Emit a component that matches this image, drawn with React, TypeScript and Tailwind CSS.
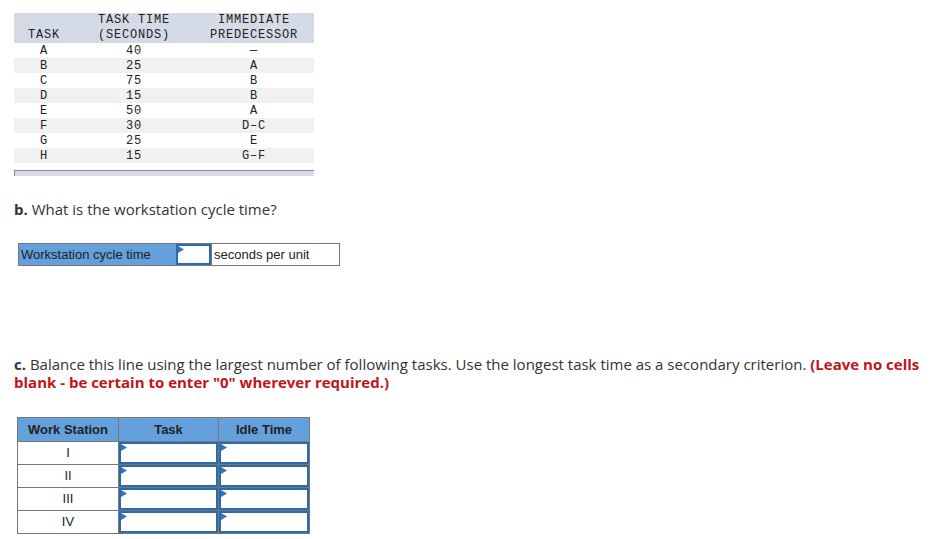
import React from "react";

const rows = [
  ["A", "40", "—"],
  ["B", "25", "A"],
  ["C", "75", "B"],
  ["D", "15", "B"],
  ["E", "50", "A"],
  ["F", "30", "D–C"],
  ["G", "25", "E"],
  ["H", "15", "G–F"],
];

function Tri() {
  return (
    <svg className="absolute left-0 top-0" width="6" height="7" viewBox="0 0 6 7">
      <polygon points="0,0 6,3.5 0,7" fill="#2f74c5" />
    </svg>
  );
}

function InputCell({ w }: { w: string }) {
  return (
    <div className={`relative h-full ${w} border-2 border-[#2c6aae] bg-white`}>
      <Tri />
    </div>
  );
}

export default function App() {
  const mono = { fontFamily: '"Liberation Mono", monospace' };
  const sans = { fontFamily: '"Liberation Sans", Arial, sans-serif' };
  const body = { fontFamily: '"Open Sans", "Liberation Sans", sans-serif' };
  return (
    <div className="w-[949px] h-[539px] bg-white text-[#333] overflow-hidden">
      <div className="pl-[14px] pt-[13px]">
        <div className="w-[300px] text-[12px] tracking-[0.8px] text-[#222]" style={mono}>
          <div className="flex h-[30px] bg-[#d5dbe6] leading-[15px]">
            <div className="w-[60px] flex items-end justify-center">TASK</div>
            <div className="w-[120px] flex flex-col items-center justify-end">
              <span>TASK TIME</span>
              <span>(SECONDS)</span>
            </div>
            <div className="w-[120px] flex flex-col items-center justify-end">
              <span>IMMEDIATE</span>
              <span>PREDECESSOR</span>
            </div>
          </div>
          {rows.map((r, i) => (
            <div key={r[0]} className={`flex h-[15px] pt-[2px] leading-[13px] ${i % 2 === 1 ? "bg-[#f1f1f1]" : "bg-white"}`}>
              <div className="w-[60px] text-center">{r[0]}</div>
              <div className="w-[120px] text-center">{r[1]}</div>
              <div className="w-[120px] text-center">{r[2]}</div>
            </div>
          ))}
          <div className="mt-[7px] h-[6px] border-t border-l border-[#8a8a8a] bg-[#d5dbe6]" />
        </div>
      </div>

      <div className="pl-[14px] pt-[23px] text-[15px] leading-[20px] text-[#333]" style={body}>
        <span className="font-bold">b.</span> What is the workstation cycle time?
      </div>

      <div className="pl-[18px] pt-[24px]">
        <div className="flex h-[23px] w-[322px] border border-[#777] text-[13px]" style={sans}>
          <div className="w-[157px] bg-[#63a0dc] flex items-center pl-[2px] text-[#222]">Workstation cycle time</div>
          <InputCell w="w-[35px]" />
          <div className="flex-1 flex items-center pl-[2px] text-[#222] border-l border-[#777]">seconds per unit</div>
        </div>
      </div>

      <div className="pl-[14px] pt-[89px] pr-[20px] text-[15px] leading-[18px] text-[#333]" style={body}>
        <span className="font-bold">c.</span> Balance this line using the largest number of following tasks. Use the longest task time as a secondary criterion.{" "}
        <span className="font-bold text-[#c0141b]">(Leave no cells blank - be certain to enter "0" wherever required.)</span>
      </div>

      <div className="pl-[17px] pt-[26px]">
        <div className="w-[293px] border border-[#777] text-[13px]" style={sans}>
          <div className="flex h-[23px] bg-[#63a0dc] font-bold text-[#222]">
            <div className="w-[100px] flex items-center justify-center">Work Station</div>
            <div className="w-[100px] flex items-center justify-center border-l border-[#777]">Task</div>
            <div className="flex-1 flex items-center justify-center border-l border-[#777]">Idle Time</div>
          </div>
          {["I", "II", "III", "IV"].map((n) => (
            <div key={n} className="flex h-[23px] border-t border-[#777]">
              <div className="w-[100px] flex items-center justify-center text-[#222]">{n}</div>
              <div className="w-[100px] border-l border-[#777]">
                <InputCell w="w-full" />
              </div>
              <div className="flex-1 border-l border-[#777]">
                <InputCell w="w-full" />
              </div>
            </div>
          ))}
        </div>
      </div>
    </div>
  );
}
